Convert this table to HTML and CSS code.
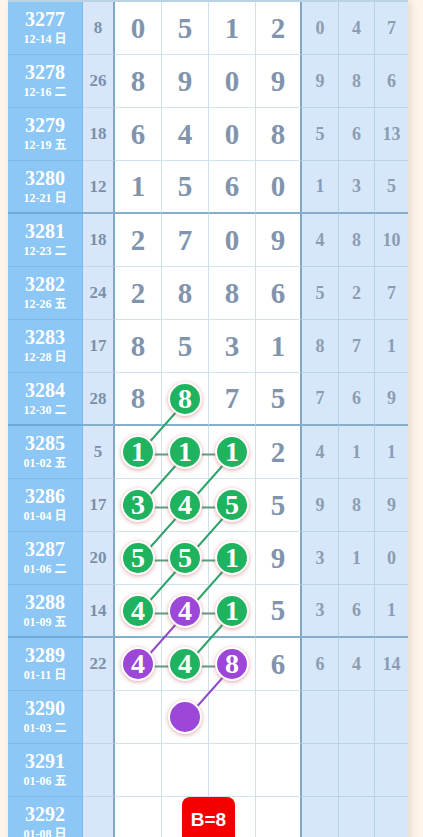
FILE: index.html
```html
<!DOCTYPE html>
<html lang="zh">
<head>
  <meta charset="UTF-8" />
  <title>走势图</title>
  <link rel="stylesheet" href="styles.css">
</head>
<body>
  <div class="chart">
    <!-- connection lines between hit balls -->
    <svg class="links" width="400" height="860" viewBox="0 0 400 860">
      <g class="flat">
        <line x1="130.5" y1="452.5" x2="224.5" y2="452.5" />
        <line x1="130.5" y1="505.5" x2="224.5" y2="505.5" />
        <line x1="130.5" y1="558.5" x2="224.5" y2="558.5" />
        <line x1="130.5" y1="611.5" x2="224.5" y2="611.5" />
        <line x1="130.5" y1="664.5" x2="224.5" y2="664.5" />
      </g>
      <g class="green">
        <line x1="177.5" y1="399.5" x2="130.5" y2="452.5" />
        <line x1="177.5" y1="452.5" x2="130.5" y2="505.5" />
        <line x1="224.5" y1="452.5" x2="177.5" y2="505.5" />
        <line x1="177.5" y1="505.5" x2="130.5" y2="558.5" />
        <line x1="224.5" y1="505.5" x2="177.5" y2="558.5" />
        <line x1="177.5" y1="558.5" x2="130.5" y2="611.5" />
        <line x1="224.5" y1="558.5" x2="177.5" y2="611.5" />
        <line x1="224.5" y1="611.5" x2="177.5" y2="664.5" />
      </g>
      <g class="purple">
        <line x1="177.5" y1="611.5" x2="130.5" y2="664.5" />
        <line x1="224.5" y1="664.5" x2="177.5" y2="717.5" />
      </g>
    </svg>

    <div class="row">
      <div class="issue"><b>3277</b><small>12-14 日</small></div>
      <div class="sum">8</div>
      <div class="d">0</div><div class="d">5</div><div class="d">1</div><div class="d">2</div>
      <div class="r">0</div><div class="r">4</div><div class="r">7</div>
    </div>
    <div class="row">
      <div class="issue"><b>3278</b><small>12-16 二</small></div>
      <div class="sum">26</div>
      <div class="d">8</div><div class="d">9</div><div class="d">0</div><div class="d">9</div>
      <div class="r">9</div><div class="r">8</div><div class="r">6</div>
    </div>
    <div class="row">
      <div class="issue"><b>3279</b><small>12-19 五</small></div>
      <div class="sum">18</div>
      <div class="d">6</div><div class="d">4</div><div class="d">0</div><div class="d">8</div>
      <div class="r">5</div><div class="r">6</div><div class="r">13</div>
    </div>
    <div class="row sep">
      <div class="issue"><b>3280</b><small>12-21 日</small></div>
      <div class="sum">12</div>
      <div class="d">1</div><div class="d">5</div><div class="d">6</div><div class="d">0</div>
      <div class="r">1</div><div class="r">3</div><div class="r">5</div>
    </div>

    <div class="row">
      <div class="issue"><b>3281</b><small>12-23 二</small></div>
      <div class="sum">18</div>
      <div class="d">2</div><div class="d">7</div><div class="d">0</div><div class="d">9</div>
      <div class="r">4</div><div class="r">8</div><div class="r">10</div>
    </div>
    <div class="row">
      <div class="issue"><b>3282</b><small>12-26 五</small></div>
      <div class="sum">24</div>
      <div class="d">2</div><div class="d">8</div><div class="d">8</div><div class="d">6</div>
      <div class="r">5</div><div class="r">2</div><div class="r">7</div>
    </div>
    <div class="row">
      <div class="issue"><b>3283</b><small>12-28 日</small></div>
      <div class="sum">17</div>
      <div class="d">8</div><div class="d">5</div><div class="d">3</div><div class="d">1</div>
      <div class="r">8</div><div class="r">7</div><div class="r">1</div>
    </div>
    <div class="row sep">
      <div class="issue"><b>3284</b><small>12-30 二</small></div>
      <div class="sum">28</div>
      <div class="d">8</div><div class="d"><span class="ball">8</span></div><div class="d">7</div><div class="d">5</div>
      <div class="r">7</div><div class="r">6</div><div class="r">9</div>
    </div>

    <div class="row">
      <div class="issue"><b>3285</b><small>01-02 五</small></div>
      <div class="sum">5</div>
      <div class="d"><span class="ball">1</span></div><div class="d"><span class="ball">1</span></div><div class="d"><span class="ball">1</span></div><div class="d">2</div>
      <div class="r">4</div><div class="r">1</div><div class="r">1</div>
    </div>
    <div class="row">
      <div class="issue"><b>3286</b><small>01-04 日</small></div>
      <div class="sum">17</div>
      <div class="d"><span class="ball">3</span></div><div class="d"><span class="ball">4</span></div><div class="d"><span class="ball">5</span></div><div class="d">5</div>
      <div class="r">9</div><div class="r">8</div><div class="r">9</div>
    </div>
    <div class="row">
      <div class="issue"><b>3287</b><small>01-06 二</small></div>
      <div class="sum">20</div>
      <div class="d"><span class="ball">5</span></div><div class="d"><span class="ball">5</span></div><div class="d"><span class="ball">1</span></div><div class="d">9</div>
      <div class="r">3</div><div class="r">1</div><div class="r">0</div>
    </div>
    <div class="row sep">
      <div class="issue"><b>3288</b><small>01-09 五</small></div>
      <div class="sum">14</div>
      <div class="d"><span class="ball">4</span></div><div class="d"><span class="ball purple">4</span></div><div class="d"><span class="ball">1</span></div><div class="d">5</div>
      <div class="r">3</div><div class="r">6</div><div class="r">1</div>
    </div>

    <div class="row">
      <div class="issue"><b>3289</b><small>01-11 日</small></div>
      <div class="sum">22</div>
      <div class="d"><span class="ball purple">4</span></div><div class="d"><span class="ball">4</span></div><div class="d"><span class="ball purple">8</span></div><div class="d">6</div>
      <div class="r">6</div><div class="r">4</div><div class="r">14</div>
    </div>
    <div class="row">
      <div class="issue"><b>3290</b><small>01-03 二</small></div>
      <div class="sum"></div>
      <div class="d"></div><div class="d"><span class="ball purple"></span></div><div class="d"></div><div class="d"></div>
      <div class="r"></div><div class="r"></div><div class="r"></div>
    </div>
    <div class="row">
      <div class="issue"><b>3291</b><small>01-06 五</small></div>
      <div class="sum"></div>
      <div class="d"></div><div class="d"></div><div class="d"></div><div class="d"></div>
      <div class="r"></div><div class="r"></div><div class="r"></div>
    </div>
    <div class="row">
      <div class="issue"><b>3292</b><small>01-08 日</small></div>
      <div class="sum"></div>
      <div class="d"></div><div class="d"></div><div class="d"></div><div class="d"></div>
      <div class="r"></div><div class="r"></div><div class="r"></div>
    </div>

    <div class="badge">B=8</div>
  </div>
</body>
</html>
```

FILE: styles.css
```css
/* === Basic Reset === */
* {
  margin: 0;
  padding: 0;
  box-sizing: border-box;
}

body {
  background: #fdf4ea;
  padding-left: 8px;
  font-family: 'Liberation Serif', 'Noto Sans CJK SC', serif;
  overflow: hidden;
}

.chart {
  position: relative;
  width: 400px;
  border-top: 2px solid #b9d3e4;
  box-shadow: 3px 0 8px rgba(0, 0, 0, 0.1);
  background: #fff;
}

.row {
  display: grid;
  grid-template-columns: 75px 32px 47px 47px 47px 46px 37px 36px 33px;
  height: 53px;
}

.row > div {
  display: flex;
  align-items: center;
  justify-content: center;
  font-weight: bold;
}

/* issue column */
.issue {
  flex-direction: column;
  background: #8dc7f6;
  color: #fff;
  border-right: 1px solid #7dbbea;
  border-bottom: 1px solid #7db9e8;
}

.issue b {
  font-size: 20px;
  line-height: 20px;
}

.issue small {
  font-size: 12px;
  line-height: 15px;
  margin-top: 3px;
}

/* sum column */
.sum {
  background: #d7e7f9;
  color: #7d8fa8;
  font-size: 17px;
  border-right: 2px solid #80a8c5;
  border-bottom: 1px solid #bfd6ea;
}

/* digit columns */
.d {
  color: #8194ad;
  font-size: 29px;
  border-right: 1px solid #cfe2ea;
  border-bottom: 1px solid #d2e3ea;
}

.d:nth-child(6) {
  border-right: 2px solid #80a8c5;
}

/* right columns */
.r {
  background: #d6e7fa;
  color: #8b9db4;
  font-size: 18px;
  border-right: 1px solid #b6d0e6;
  border-bottom: 1px solid #b9d2e6;
}

.r:last-child {
  border-right: none;
}

.row.sep > div {
  border-bottom: 2px solid #86adc9;
}

.row.sep > .issue {
  border-bottom-color: #6fa9d8;
}

/* balls */
.ball {
  position: relative;
  z-index: 2;
  width: 34px;
  height: 34px;
  border-radius: 50%;
  background: #20b35f;
  border: 2px solid #fff;
  box-shadow: 0 1px 4px rgba(190, 80, 80, 0.5);
  color: #fff;
  font-size: 28px;
  line-height: 30px;
  text-align: center;
}

.ball.purple {
  background: #9c47d8;
}

/* lines */
.links {
  position: absolute;
  top: 0;
  left: 0;
  z-index: 1;
  pointer-events: none;
}

.links line {
  stroke-width: 2;
}

.links .flat line {
  stroke: #5f9c7e;
}

.links .green line {
  stroke: #2fa36a;
}

.links .purple line {
  stroke: #8d4cc6;
}

.badge {
  position: absolute;
  z-index: 3;
  left: 174px;
  top: 795px;
  width: 53px;
  height: 50px;
  padding-top: 12px;
  border-radius: 8px;
  background: #f50000;
  color: #fff;
  font-family: 'Liberation Sans', sans-serif;
  font-weight: bold;
  font-size: 19px;
  text-align: center;
}
```
